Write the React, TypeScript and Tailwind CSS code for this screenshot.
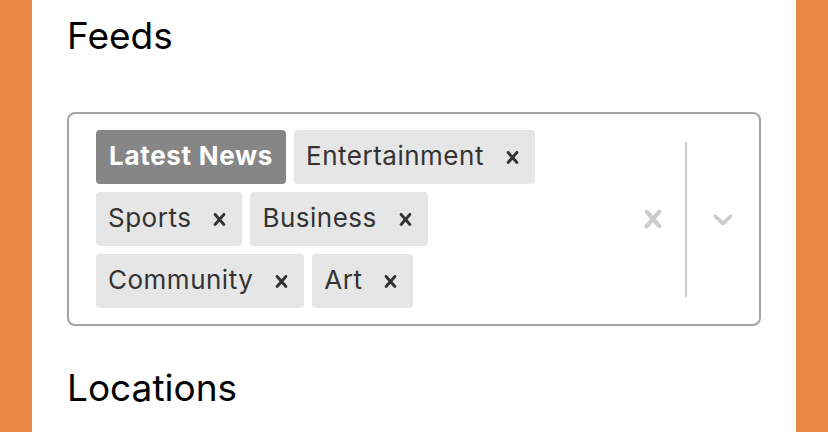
import React from "react";

const feeds = [
  { label: "Latest News", fixed: true },
  { label: "Entertainment" },
  { label: "Sports" },
  { label: "Business" },
  { label: "Community" },
  { label: "Art" },
];

function Cross({ className }: { className?: string }) {
  return (
    <svg viewBox="0 0 20 20" className={className} fill="currentColor">
      <path d="M14.348 14.849c-0.469 0.469-1.229 0.469-1.697 0l-2.651-3.030-2.651 3.029c-0.469 0.469-1.229 0.469-1.697 0-0.469-0.469-0.469-1.229 0-1.697l2.758-3.15-2.759-3.152c-0.469-0.469-0.469-1.228 0-1.697s1.228-0.469 1.697 0l2.652 3.031 2.651-3.031c0.469-0.469 1.228-0.469 1.697 0s0.469 1.229 0 1.697l-2.758 3.152 2.758 3.15c0.469 0.469 0.469 1.229 0 1.698z" />
    </svg>
  );
}

function Chevron({ className }: { className?: string }) {
  return (
    <svg viewBox="0 0 20 20" className={className} fill="currentColor">
      <path d="M4.516 7.548c0.436-0.446 1.043-0.481 1.576 0l3.908 3.747 3.908-3.747c0.533-0.481 1.141-0.446 1.574 0 0.436 0.445 0.408 1.197 0 1.615-0.406 0.418-4.695 4.502-4.695 4.502-0.217 0.223-0.502 0.335-0.787 0.335s-0.57-0.112-0.789-0.335c0 0-4.287-4.084-4.695-4.502s-0.436-1.17 0-1.615z" />
    </svg>
  );
}

export default function App() {
  return (
    <div
      className="flex h-[432px] w-[828px] bg-[#ec8645] px-8 text-black"
      style={{ fontFamily: "Inter, 'Noto Sans', sans-serif" }}
    >
      <div className="flex flex-1 flex-col bg-white px-[35px]">
        <h2 className="mt-[14px] text-[37px] leading-[44px] font-normal">Feeds</h2>
        <div className="mt-[54px] flex h-[214px] rounded-[8px] border-2 border-[#a4a4a8] bg-white">
          <div className="flex flex-1 flex-wrap content-center gap-x-2 gap-y-2 pl-[27px] pr-4">
            {feeds.map((f) =>
              f.fixed ? (
                <span
                  key={f.label}
                  className="flex h-[54px] items-center rounded-[4px] bg-[#868686] px-[13px] pb-[3px] text-[26px] font-bold tracking-[0.7px] text-white"
                >
                  {f.label}
                </span>
              ) : (
                <span
                  key={f.label}
                  className="flex h-[54px] items-center rounded-[4px] bg-[#e6e6e6] pl-[12px] text-[26px] tracking-[0.5px] text-[#333333]"
                >
                  <span className="pb-[3px]">{f.label}</span>
                  <span className="ml-[12px] flex h-full items-center pr-[10px] pl-[4px]">
                    <Cross className="h-[25px] w-[25px] text-[#333333]" />
                  </span>
                </span>
              )
            )}
          </div>
          <div className="flex items-center">
            <span className="flex items-center px-[14px] text-[#cccccc]">
              <Cross className="h-[36px] w-[36px]" />
            </span>
            <span className="h-[155px] w-[2px] bg-[#cccccc]" />
            <span className="flex items-center px-[20px] text-[#cccccc]">
              <Chevron className="h-[32px] w-[32px]" />
            </span>
          </div>
        </div>
        <h2 className="mt-[40px] text-[37px] leading-[44px] font-normal">Locations</h2>
      </div>
    </div>
  );
}
